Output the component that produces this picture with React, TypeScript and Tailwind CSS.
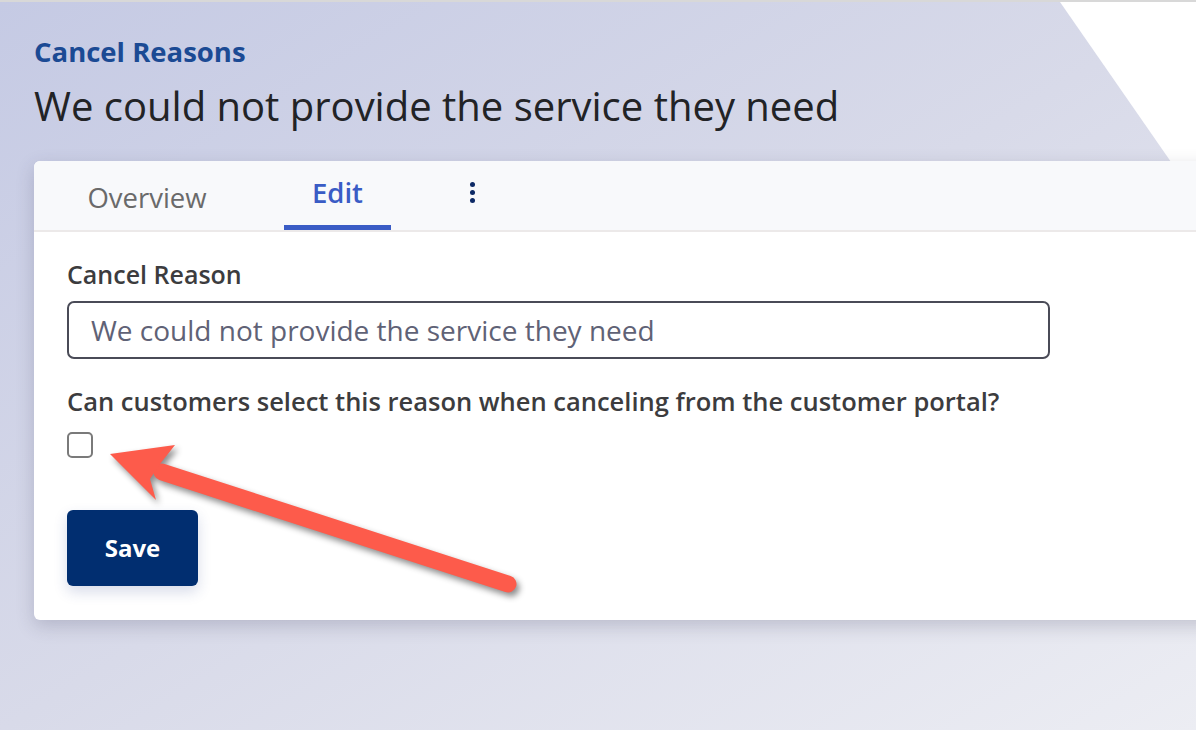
import React from 'react';

const font = { fontFamily: '"Open Sans", Lato, sans-serif' };

const CancelReasonArrow: React.FC = () => (
  <svg
    className="pointer-events-none absolute left-0 top-0"
    width="600"
    height="640"
    viewBox="0 0 600 640"
    style={{ filter: 'drop-shadow(3px 4px 3px rgba(0,0,0,0.45))' }}
  >
    <line x1="162" y1="470" x2="508" y2="582" stroke="#fd5b4b" strokeWidth="17" strokeLinecap="round" />
    <polygon points="110,452 175,443 160,462 150,477 156,498" fill="#fd5b4b" />
  </svg>
);

export default function App() {
  return (
    <div
      className="relative h-[730px] w-full overflow-hidden border-t-2 border-[#d8d8d8] bg-gradient-to-br from-[#c5cae4] via-[#d8dae9] to-[#ecedf3]"
      style={font}
    >
      {/* white slanted panel, top right */}
      <svg className="absolute right-0 top-0" width="140" height="200" viewBox="0 0 140 200">
        <polygon points="4,0 140,0 140,196" fill="#ffffff" />
      </svg>

      <div className="relative flex flex-col pl-[34px] pt-[34px]">
        <h2 className="text-[27.5px] font-bold leading-8 text-[#1b4a94]">Cancel Reasons</h2>
        <h1 className="mt-[14px] text-[40px] font-normal leading-[48px] text-[#222326]">
          We could not provide the service they need
        </h1>

        <div className="mr-[-40px] mt-[31px] overflow-hidden rounded-l-md bg-white shadow-[0_6px_18px_rgba(60,60,90,0.22)]">
          <div className="flex h-[71px] items-stretch border-b-2 border-[#ece9e9] bg-[#f8f9fb] pl-[33px]">
            <div className="flex w-[160px] items-center justify-center pt-[4px] text-[27.5px] text-[#6a6a6a]">Overview</div>
            <div className="ml-[57px] flex w-[107px] flex-col">
              <div className="flex flex-1 items-center justify-center text-[27.5px] font-semibold text-[#3a5cc5]">Edit</div>
              <div className="h-[5px] bg-[#3a5cc5]" />
            </div>
            <div className="ml-[79px] flex flex-col items-center justify-center gap-[3px] pb-[6px]">
              <span className="h-[5px] w-[5px] rounded-full bg-[#0d2a66]" />
              <span className="h-[5px] w-[5px] rounded-full bg-[#0d2a66]" />
              <span className="h-[5px] w-[5px] rounded-full bg-[#0d2a66]" />
            </div>
          </div>

          <div className="flex flex-col pb-[34px] pl-[33px] pt-[28px]">
            <label className="text-[25px] font-semibold leading-7 text-[#3c3c3e]">Cancel Reason</label>
            <div className="mt-[13px] flex h-[58px] w-[983px] items-center rounded-[7px] border-2 border-[#4a4b57] px-[22px]">
              <span className="text-[28px] leading-8 text-[#5f6276]">We could not provide the service they need</span>
            </div>
            <div className="mt-[28px] text-[25.5px] font-semibold leading-7 text-[#3c3c3e]">
              Can customers select this reason when canceling from the customer portal?
            </div>
            <div className="mt-[17px] h-[26px] w-[26px] rounded-[5px] border-2 border-[#7a7a7a] bg-white" />
            <button className="mt-[52px] flex h-[76px] w-[131px] items-center justify-center rounded-[6px] bg-[#012e70] text-[24px] font-bold text-white shadow-[0_6px_14px_rgba(40,60,140,0.18)]">
              Save
            </button>
          </div>
        </div>
      </div>

      <CancelReasonArrow />
    </div>
  );
}
